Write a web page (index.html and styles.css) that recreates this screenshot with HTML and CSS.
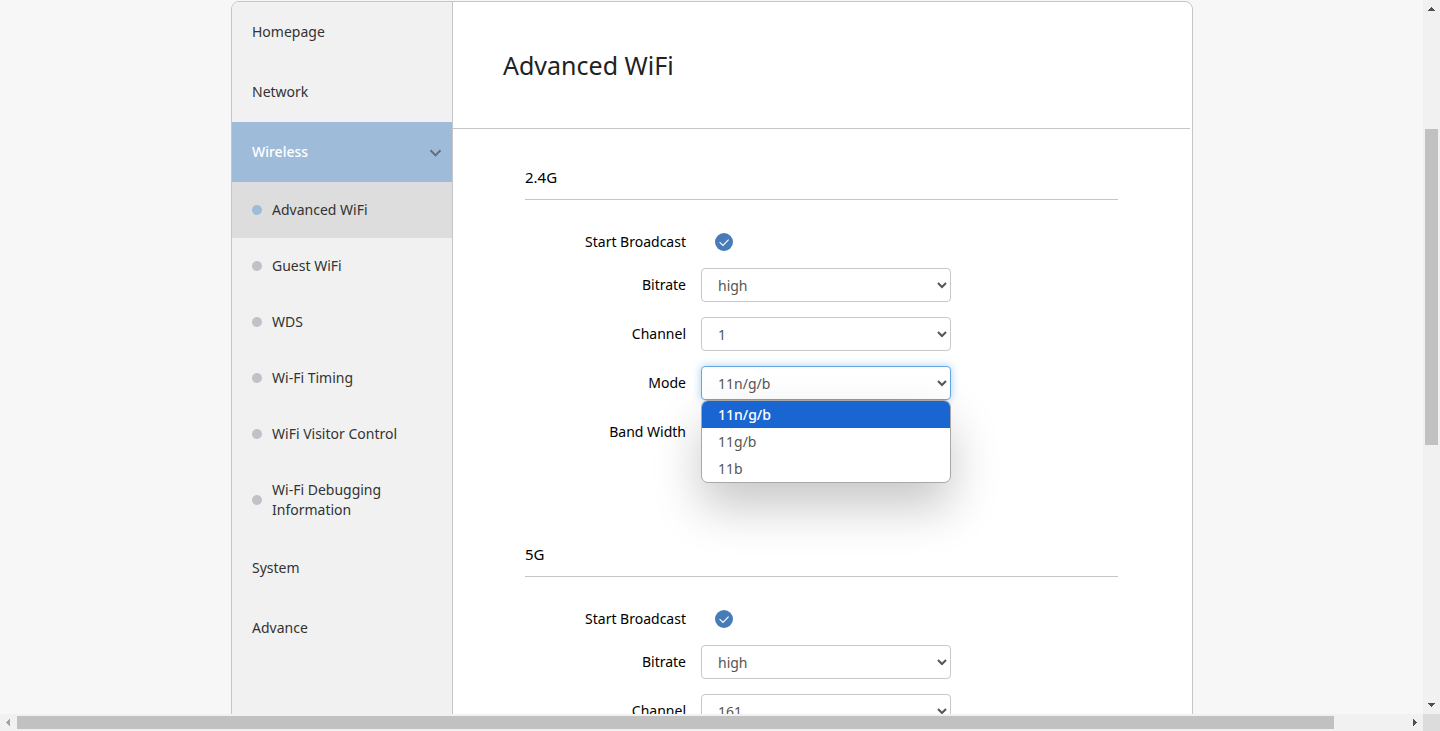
FILE: index.html
```html
<!DOCTYPE html>
<html lang="en">
<head>
<meta charset="utf-8">
<title>Advanced WiFi</title>
<link rel="stylesheet" href="styles.css">
</head>
<body>
<div class="window">
  <div class="viewport">
    <div class="panel">
      <nav class="sidebar">
        <a class="nav-item" href="#">Homepage</a>
        <a class="nav-item" href="#">Network</a>
        <a class="nav-item nav-item-open" href="#">Wireless
          <svg class="chevron" viewBox="0 0 12 8" aria-hidden="true"><path d="M1 1.2 6 6.4 11 1.2"/></svg>
        </a>
        <a class="sub-item sub-item-active" href="#"><span class="dot"></span><span>Advanced WiFi</span></a>
        <a class="sub-item" href="#"><span class="dot"></span><span>Guest WiFi</span></a>
        <a class="sub-item" href="#"><span class="dot"></span><span>WDS</span></a>
        <a class="sub-item" href="#"><span class="dot"></span><span>Wi-Fi Timing</span></a>
        <a class="sub-item" href="#"><span class="dot"></span><span>WiFi Visitor Control</span></a>
        <a class="sub-item" href="#"><span class="dot"></span><span>Wi-Fi Debugging Information</span></a>
        <a class="nav-item" href="#">System</a>
        <a class="nav-item" href="#">Advance</a>
      </nav>
      <main class="content">
        <header class="page-head"><h1 class="page-title">Advanced WiFi</h1></header>
        <section class="band">
          <h2 class="band-title">2.4G</h2>
          <div class="form">
            <div class="row row-check">
              <label class="label" for="broadcast24">Start Broadcast</label>
              <span class="check">
                <input class="check-input" type="checkbox" id="broadcast24" checked>
                <svg class="check-mark" viewBox="0 0 18 18" aria-hidden="true"><path d="M4.6 9.2 8 12.4 13.6 6.6"/></svg>
              </span>
            </div>
            <div class="row">
              <label class="label" for="bitrate24">Bitrate</label>
              <select class="select" id="bitrate24"><option>high</option></select>
            </div>
            <div class="row">
              <label class="label" for="channel24">Channel</label>
              <select class="select" id="channel24"><option>1</option></select>
            </div>
            <div class="row">
              <label class="label" for="mode24">Mode</label>
              <div class="select-wrap">
                <select class="select select-focus" id="mode24"><option>11n/g/b</option><option>11g/b</option><option>11b</option></select>
                <ul class="menu" role="listbox" aria-label="Mode">
                  <li class="option option-selected" role="option" aria-selected="true">11n/g/b</li>
                  <li class="option" role="option" aria-selected="false">11g/b</li>
                  <li class="option" role="option" aria-selected="false">11b</li>
                </ul>
              </div>
            </div>
            <div class="row">
              <label class="label" for="width24">Band Width</label>
              <select class="select" id="width24"></select>
            </div>
          </div>
        </section>
        <section class="band">
          <h2 class="band-title">5G</h2>
          <div class="form">
            <div class="row row-check">
              <label class="label" for="broadcast5">Start Broadcast</label>
              <span class="check">
                <input class="check-input" type="checkbox" id="broadcast5" checked>
                <svg class="check-mark" viewBox="0 0 18 18" aria-hidden="true"><path d="M4.6 9.2 8 12.4 13.6 6.6"/></svg>
              </span>
            </div>
            <div class="row">
              <label class="label" for="bitrate5">Bitrate</label>
              <select class="select" id="bitrate5"><option>high</option></select>
            </div>
            <div class="row">
              <label class="label" for="channel5">Channel</label>
              <select class="select" id="channel5"><option>161</option></select>
            </div>
          </div>
        </section>
      </main>
    </div>
  </div>
  <div class="bar bar-v" aria-hidden="true">
    <svg class="arrow" viewBox="0 0 17 17"><path d="M5 11h7v-1h-1V9h-1V8H9V7H8v1H7v1H6v1H5z"/></svg>
    <div class="track track-v"><div class="thumb thumb-v"></div></div>
    <svg class="arrow" viewBox="0 0 17 17"><path d="M5 6h7v1h-1v1h-1v1H9v1H8V9H7V8H6V7H5z"/></svg>
  </div>
  <div class="bar bar-h" aria-hidden="true">
    <svg class="arrow arrow-off" viewBox="0 0 17 17"><path d="M10 5v7H9v-1H8v-1H7V9H6V8h1V7h1V6h1V5z"/></svg>
    <div class="track track-h"><div class="thumb thumb-h"></div></div>
    <svg class="arrow" viewBox="0 0 17 17"><path d="M7 5h1v1h1v1h1v1h1v1h-1v1H9v1H8v1H7z"/></svg>
  </div>
  <div class="corner"></div>
</div>
</body>
</html>
```
FILE: styles.css
```css
* { box-sizing: border-box; }

body {
  margin: 0;
  font-family: "Noto Sans", "Open Sans", sans-serif;
  font-size: 14px;
  line-height: 20px;
  color: #000;
}

.window {
  display: grid;
  grid-template-columns: minmax(0, 1fr) 17px;
  grid-template-rows: minmax(0, 1fr) 17px;
  height: 100vh;
}

.viewport {
  overflow: hidden;
  padding: 1px 0 0 1px;
  background: #f7f7f7;
}

.panel {
  display: flex;
  max-width: 962px;
  min-height: 100vh;
  margin: 0 auto;
  overflow: hidden;
  border: 1px solid #c5c5c7;
  border-radius: 8px;
  background: #fff;
}

.sidebar {
  flex: 0 0 221px;
  border-right: 1px solid #c5c5c7;
  background: #f1f1f1;
}

.nav-item,
.sub-item {
  display: flex;
  align-items: center;
  color: #333;
  text-decoration: none;
}

.nav-item {
  justify-content: space-between;
  height: 60px;
  padding: 0 10px 0 20px;
}

.nav-item-open {
  background: #9fbbda;
  color: #fff;
  font-weight: 500;
}

.chevron {
  width: 13px;
  height: 8px;
  margin-top: 2px;
  fill: none;
  stroke: #666e78;
  stroke-width: 2;
}

.sub-item {
  gap: 10px;
  padding: 18px 40px 18px 20px;
}

.sub-item-active { background: #ddd; }

.dot {
  flex: none;
  width: 10px;
  height: 10px;
  border-radius: 50%;
  background: #c0c2c8;
}

.sub-item-active .dot { background: #9fbbda; }

.content {
  flex: 1;
  min-width: 0;
  padding-right: 2px;
}

.page-head {
  padding: 46px 50px;
  border-bottom: 1px solid #c5c5c7;
}

.page-title {
  margin: 0;
  font-size: 25px;
  line-height: 34px;
  font-weight: 400;
  color: #222;
}

.band { padding: 28px 72px 57px; }

.band-title {
  margin: 0;
  padding: 10px 0 12px;
  border-bottom: 1px solid #c5c5c7;
  font-size: 15px;
  line-height: 20px;
  font-weight: 400;
}

.form {
  display: flex;
  flex-direction: column;
  gap: 15px;
  padding-top: 31px;
}

.row {
  display: flex;
  align-items: center;
  gap: 15px;
}

.row-check { height: 22px; }

.label {
  width: 161px;
  text-align: right;
}

.check {
  position: relative;
  width: 18px;
  height: 18px;
  margin-left: 14px;
}

.check-input {
  display: block;
  width: 18px;
  height: 18px;
  margin: 0;
  appearance: none;
  border-radius: 50%;
  background: #477cb8;
}

.check-mark {
  position: absolute;
  inset: 0;
  fill: none;
  stroke: #fff;
  stroke-width: 1.1;
  pointer-events: none;
}

.select {
  display: block;
  width: 250px;
  height: 34px;
  padding: 6px 12px;
  border: 1px solid #c8c8ca;
  border-radius: 4px;
  background: #fff;
  color: #555;
  font: inherit;
}

.select-focus {
  border-color: #66a7df;
  box-shadow: 0 0 8px rgba(102, 175, 233, 0.6);
}

.select-wrap { position: relative; }

.menu {
  position: absolute;
  z-index: 1;
  top: 100%;
  left: 0;
  width: 100%;
  margin: 0;
  padding: 0;
  overflow: hidden;
  border: 1px solid #a8a8a8;
  border-radius: 7px;
  background: #fff;
  box-shadow: 0 24px 48px rgba(0, 0, 0, 0.22);
  list-style: none;
}

.option {
  padding: 0 16px;
  line-height: 27px;
  color: #555;
}

.option-selected {
  background: #1966d2;
  color: #fff;
  font-weight: 500;
}

.bar {
  display: flex;
  background: #f1f1f1;
}

.bar-v { flex-direction: column; }

.arrow {
  flex: none;
  width: 17px;
  height: 17px;
  fill: #505050;
}

.arrow-off { fill: #a3a3a3; }

.track { flex: 1; display: flex; }

.track-v { flex-direction: column; padding: 0 2px; }
.track-v::before { content: ""; height: 16.5%; }
.thumb-v { height: 46.5%; }

.track-h { padding: 2px 0; }
.thumb-h { width: 94.8%; }

.thumb { background: #c1c1c1; }

.corner { background: #dcdcdc; }
```
